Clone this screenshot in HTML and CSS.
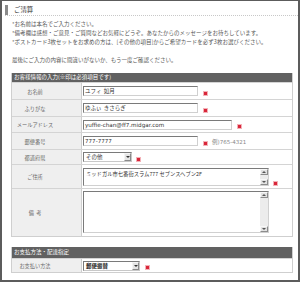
FILE: index.html
```html
<!DOCTYPE html>
<html lang="ja">
<head>
<meta charset="utf-8">
<link rel="stylesheet" href="styles.css">
</head>
<body>
<div class="frame">
  <div class="heading"><span class="bar"></span><span class="title">ご清算</span></div>
  <div class="notes">
    <p>*お名前は本名でご入力ください。</p>
    <p>*備考欄は感想・ご意見・ご質問などお気軽にどうぞ。あなたからのメッセージをお待ちしています。</p>
    <p>*ポストカード3枚セットをお求めの方は、[その他の項目]からご希望カードを必ず3枚お選びください。</p>
    <p>&nbsp;</p>
    <p>最後にご入力の内容に間違いがないか、もう一度ご確認ください。</p>
  </div>

  <div class="table first">
    <div class="thead">お客様情報の入力(※印は必須項目です)</div>
    <div class="row h17">
      <div class="label">お名前</div>
      <div class="cell"><div class="input w115">ユフィ&nbsp;&nbsp;如月</div><span class="req"></span></div>
    </div>
    <div class="row h17">
      <div class="label">ふりがな</div>
      <div class="cell"><div class="input w115">ゆふぃ&nbsp;&nbsp;きさらぎ</div><span class="req"></span></div>
    </div>
    <div class="row h16">
      <div class="label">メールアドレス</div>
      <div class="cell"><div class="input w149 latin">yuffie-chan@ff7.midgar.com</div><span class="req"></span></div>
    </div>
    <div class="row h17">
      <div class="label">郵便番号</div>
      <div class="cell"><div class="input w115 latin">777-7777</div><span class="req"></span><span class="hint">例)765-4321</span></div>
    </div>
    <div class="row h15">
      <div class="label">都道府県</div>
      <div class="cell"><div class="select w49"><span class="val">その他</span><span class="arrow"></span></div><span class="req near"></span></div>
    </div>
    <div class="row h24">
      <div class="label">ご住所</div>
      <div class="cell top"><div class="textarea addr"><div class="text">ミッドガル市七番街スラム777 セブンスヘブン2F</div><div class="sb"><span class="sbtn up"></span><span class="sbtn down"></span></div></div><span class="req low"></span></div>
    </div>
    <div class="row h48">
      <div class="label">備&nbsp;&nbsp;考</div>
      <div class="cell top"><div class="textarea memo"><div class="text"></div><div class="sb"><span class="sbtn up"></span><span class="sbtn down"></span></div></div></div>
    </div>
  </div>

  <div class="table second">
    <div class="thead tall">お支払方法・配達指定</div>
    <div class="row h14">
      <div class="label">お支払い方法</div>
      <div class="cell"><div class="select w57"><span class="val strong">郵便振替</span><span class="arrow"></span></div><span class="req near2"></span></div>
    </div>
  </div>
</div>
</body>
</html>
```

FILE: styles.css
```css
* { box-sizing: border-box; }
html, body { margin: 0; padding: 0; background: #fff; }
body { font-family: "Noto Sans CJK JP", "Noto Sans", sans-serif; color: #444; }

.frame {
  width: 300px;
  height: 282px;
  border: 2px solid #5c5c5c;
  border-top-width: 1px;
  overflow: hidden;
}

.heading {
  display: flex;
  align-items: center;
  margin: 3px 0 0 3px;
  height: 12px;
  border-bottom: 1px dotted #c8c8c8;
}
.bar { width: 3px; height: 10px; background: #8a8a8a; }
.title { margin-left: 6px; font-size: 6.4px; line-height: 10px; color: #333; }

.notes { margin: 4px 0 0 10px; font-size: 5.5px; line-height: 9px; color: #555; }
.notes p { margin: 0; white-space: nowrap; }

.table {
  margin: 8px 5px 0 9px;
  border: 1px solid #cfcfcf;
  border-top: 0;
}
.table.second { margin-top: 10px; }

.thead {
  height: 9px;
  background: #616161;
  color: #fff;
  font-size: 5.5px;
  line-height: 9px;
  padding-left: 2px;
  white-space: nowrap;
}
.thead.tall { height: 11px; line-height: 11px; }

.row { display: flex; border-top: 1px solid #d4d4d4; }
.h14 { height: 14px; }
.h15 { height: 15px; }
.h16 { height: 16px; }
.h17 { height: 17px; }
.h24 { height: 24px; }
.h48 { height: 48px; }

.label {
  width: 70px;
  flex: none;
  background: #efefef;
  border-right: 1px solid #cfcfcf;
  display: flex;
  align-items: center;
  justify-content: center;
  padding-right: 23px;
  font-size: 5.2px;
  color: #666;
  white-space: nowrap;
}

.cell {
  flex: 1;
  display: flex;
  align-items: center;
  padding-left: 1px;
}
.cell.top { align-items: flex-start; padding-top: 2px; }

.input {
  height: 10px;
  border: 1px solid;
  border-color: #7a7a7a #d0d0d0 #d0d0d0 #7a7a7a;
  background: #fff;
  font-size: 5.5px;
  line-height: 8px;
  padding-left: 1px;
  color: #333;
  white-space: nowrap;
  overflow: hidden;
}
.input.latin { font-family: "DejaVu Sans", "Noto Sans CJK JP", sans-serif; font-size: 5.6px; }
.w115 { width: 115px; }
.w149 { width: 149px; }
.w49 { width: 49px; }
.w57 { width: 57px; }

.req {
  width: 3px;
  height: 3px;
  background: #d9263a;
  box-shadow: 0 0 0 1px #f3b2b8;
  margin-left: 6px;
  align-self: center;
  margin-top: 4px;
}
.req.near { margin-left: 5px; }
.req.near2 { margin-left: 6px; }
.req.low { align-self: flex-start; margin-top: 15px; margin-left: 5px; }

.hint { margin-left: 5px; font-size: 5.5px; color: #888; margin-top: 1px; font-family: "DejaVu Sans", "Noto Sans CJK JP", sans-serif; }

.select {
  height: 10px;
  display: flex;
  border: 1px solid;
  border-color: #7a7a7a #c8c8c8 #c8c8c8 #7a7a7a;
  background: #fff;
}
.select .val { flex: 1; font-size: 5.5px; line-height: 8px; padding-left: 2px; color: #333; white-space: nowrap; }
.select .val.strong { font-weight: bold; color: #222; }
.arrow {
  width: 7px;
  height: 8px;
  background: #e4e4e4;
  border: 1px solid #a8a8a8;
  border-color: #f4f4f4 #8a8a8a #8a8a8a #f4f4f4;
  position: relative;
}
.arrow::after {
  content: "";
  position: absolute;
  left: 1px;
  top: 2px;
  border-left: 2px solid transparent;
  border-right: 2px solid transparent;
  border-top: 2px solid #333;
}

.textarea {
  width: 186px;
  display: flex;
  border: 1px solid;
  border-color: #7a7a7a #d0d0d0 #d0d0d0 #7a7a7a;
  background: #fff;
}
.textarea.addr { height: 18px; margin-top: 1px; }
.textarea.memo { height: 42px; }
.textarea .text { flex: 1; font-size: 5.3px; line-height: 8px; padding: 1px 2px; color: #333; white-space: nowrap; overflow: hidden; }
.sb {
  width: 8px;
  background: #ececec;
  display: flex;
  flex-direction: column;
  justify-content: space-between;
}
.sbtn {
  height: 6px;
  background: #e2e2e2;
  border: 1px solid;
  border-color: #f8f8f8 #8c8c8c #8c8c8c #f8f8f8;
  position: relative;
}
.sbtn::after {
  content: "";
  position: absolute;
  left: 1px;
  border-left: 2px solid transparent;
  border-right: 2px solid transparent;
}
.sbtn.up::after { top: 1px; border-bottom: 2px solid #555; }
.sbtn.down::after { top: 1px; border-top: 2px solid #555; }
```
